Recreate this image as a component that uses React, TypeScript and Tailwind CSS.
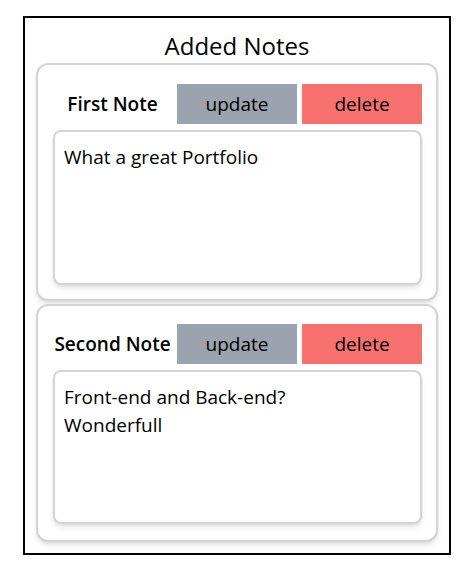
import React from "react";

const notes = [
  { title: "First Note", body: "What a great Portfolio", pad: "pt-[19px] pb-[14px]", h: "h-[155px]" },
  { title: "Second Note", body: "Front-end and Back-end?\nWonderfull", pad: "pt-[18px] pb-[16px]", h: "h-[154px]" },
];

function NoteCard({ title, body, pad, h }: { title: string; body: string; pad: string; h: string }) {
  return (
    <div className={`rounded-xl border-2 border-[#d1d5db] bg-white shadow-md pl-[15px] pr-[14px] ${pad}`}>
      <div className="flex h-[40px] items-stretch gap-[5px]">
        <div className="flex flex-1 items-center justify-center text-[19px] font-semibold text-black">{title}</div>
        <button className="w-[120px] bg-[#9ca3af] text-[19px] text-black">update</button>
        <button className="w-[120px] bg-[#f87171] text-[19px] text-black">delete</button>
      </div>
      <div className={`mt-[6px] ${h} whitespace-pre-line rounded-lg border-2 border-[#d1d5db] bg-white pt-[11px] px-[9px] text-[19px] leading-7 text-black shadow-md`}>
        {body}
      </div>
    </div>
  );
}

export default function App() {
  return (
    <div className="min-h-[572px] bg-white pt-[16px]" style={{ fontFamily: '"Open Sans", "Noto Sans", sans-serif' }}>
      <div className="ml-[23px] w-[428px] h-[539px] border-2 border-black px-[11px] pt-[12px]">
        <h1 className="mb-[1px] text-center text-2xl leading-8 text-black">Added Notes</h1>
        <div className="flex flex-col gap-[3px]">
          {notes.map((n) => (
            <NoteCard key={n.title} title={n.title} body={n.body} pad={n.pad} h={n.h} />
          ))}
        </div>
      </div>
    </div>
  );
}
